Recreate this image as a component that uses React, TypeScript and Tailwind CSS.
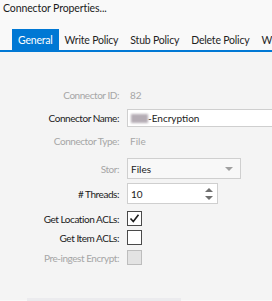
import React from 'react';

const tabs = ['General', 'Write Policy', 'Stub Policy', 'Delete Policy', 'WORM Policy'];

function Row({ label, disabled, className, children }: { label: string; disabled?: boolean; className: string; children: React.ReactNode }) {
  return (
    <div className={`flex items-center ${className}`}>
      <div className={`w-[119px] shrink-0 text-right tracking-[-0.45px] ${disabled ? 'text-[#a6a6a6]' : 'text-[#1b1b1b]'}`}>{label}</div>
      <div className="ml-[8px] flex-1 min-w-0 flex items-center">{children}</div>
    </div>
  );
}

export default function App() {
  return (
    <div className="w-[272px] h-[301px] overflow-hidden bg-[#f9f9f9] text-[10px] leading-[14px] font-['Lato',sans-serif] text-[#1b1b1b]">
      <div className="h-[29px] pl-[3px] pt-[1px] text-[10.5px] tracking-[-0.1px]">Connector Properties...</div>

      <div className="flex h-[21px] pl-[12px] whitespace-nowrap overflow-hidden text-[10.5px] tracking-[-0.2px]">
        {tabs.map((t, i) => (
          <div
            key={t}
            className={`px-[6px] flex items-center shrink-0 ${i === 0 ? 'bg-[#0078d4] text-white' : 'text-[#1f1f1f]'}`}
          >
            {t}
          </div>
        ))}
      </div>

      <div className="flex h-[250px]">
        <div className="w-[12px] bg-[#ebebee]" />
        <div className="flex-1 bg-[#f4f4f4] border-t-2 border-[#0078d4] pt-[32px]">
          <Row label="Connector ID:" disabled className="h-[22px]">
            <span className="pl-[3px] text-[#a6a6a6]">82</span>
          </Row>
          <Row label="Connector Name:" className="h-[24px]">
            <div className="h-[18px] w-[160px] shrink-0 bg-white border border-[#cfcfcf] flex items-center pl-[3px]">
              <span className="inline-block w-[17px] h-[9px] bg-[#b5adb5] blur-[1px]" />
              <span>-Encryption</span>
            </div>
          </Row>
          <Row label="Connector Type:" disabled className="h-[22px]">
            <span className="pl-[3px] text-[#a6a6a6]">File</span>
          </Row>
          <Row label="Stor:" disabled className="h-[21px] mt-[6px]">
            <div className="h-[21px] w-[114px] bg-[#f8f8f8] border border-[#cfcfcf] flex items-center justify-between pl-[3px] pr-[7px] text-[#1b1b1b]">
              <span>Files</span>
              <span className="w-0 h-0 border-l-[4px] border-r-[4px] border-t-[4px] border-l-transparent border-r-transparent border-t-[#a0a0a0]" />
            </div>
          </Row>
          <Row label="# Threads:" className="h-[21px] mt-[4px]">
            <div className="h-[21px] w-[91px] bg-white border border-[#cfcfcf] flex items-center justify-between pl-[3px] pr-[4px]">
              <span>10</span>
              <div className="flex flex-col gap-[4px]">
                <span className="w-0 h-0 border-l-[4px] border-r-[4px] border-b-[4px] border-l-transparent border-r-transparent border-b-[#707070]" />
                <span className="w-0 h-0 border-l-[4px] border-r-[4px] border-t-[4px] border-l-transparent border-r-transparent border-t-[#707070]" />
              </div>
            </div>
          </Row>
          <Row label="Get Location ACLs:" className="h-[15px] mt-[7px]">
            <div className="w-[15px] h-[15px] bg-white border border-[#4a4a4a] flex items-center justify-center">
              <svg width="11" height="11" viewBox="0 0 11 11">
                <path d="M1.5 5.5 L4.3 8.5 L9.5 1.8" fill="none" stroke="#1b1b1b" strokeWidth="1.6" />
              </svg>
            </div>
          </Row>
          <Row label="Get Item ACLs:" className="h-[15px] mt-[4px]">
            <div className="w-[15px] h-[15px] bg-white border border-[#4a4a4a]" />
          </Row>
          <Row label="Pre-ingest Encrypt:" disabled className="h-[15px] mt-[5px]">
            <div className="w-[15px] h-[15px] bg-[#e3e3e3] border border-[#bdbdbd]" />
          </Row>
          <div className="mt-[33px] ml-[27px] w-[154px] h-[6px] bg-[#ebebee]" />
        </div>
      </div>
    </div>
  );
}
